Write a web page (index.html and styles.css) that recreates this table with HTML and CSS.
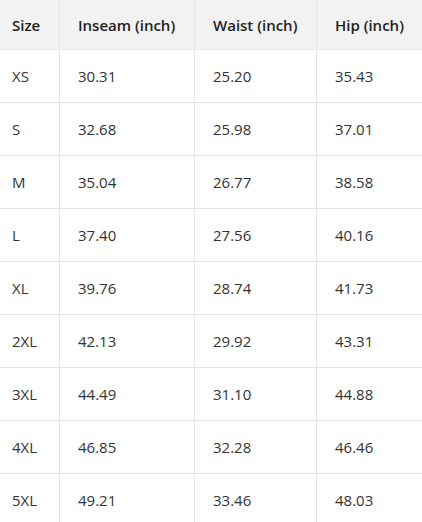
FILE: index.html
```html
<!DOCTYPE html>
<html lang="en">
<head>
<meta charset="utf-8">
<title>Size chart</title>
<link rel="stylesheet" href="styles.css">
</head>
<body>
<div class="size-table">
  <div class="cell head first">Size</div>
  <div class="cell head">Inseam (inch)</div>
  <div class="cell head">Waist (inch)</div>
  <div class="cell head last">Hip (inch)</div>

  <div class="cell first">XS</div><div class="cell">30.31</div><div class="cell">25.20</div><div class="cell last">35.43</div>
  <div class="cell first">S</div><div class="cell">32.68</div><div class="cell">25.98</div><div class="cell last">37.01</div>
  <div class="cell first">M</div><div class="cell">35.04</div><div class="cell">26.77</div><div class="cell last">38.58</div>
  <div class="cell first">L</div><div class="cell">37.40</div><div class="cell">27.56</div><div class="cell last">40.16</div>
  <div class="cell first">XL</div><div class="cell">39.76</div><div class="cell">28.74</div><div class="cell last">41.73</div>
  <div class="cell first">2XL</div><div class="cell">42.13</div><div class="cell">29.92</div><div class="cell last">43.31</div>
  <div class="cell first">3XL</div><div class="cell">44.49</div><div class="cell">31.10</div><div class="cell last">44.88</div>
  <div class="cell first">4XL</div><div class="cell">46.85</div><div class="cell">32.28</div><div class="cell last">46.46</div>
  <div class="cell first">5XL</div><div class="cell">49.21</div><div class="cell">33.46</div><div class="cell last">48.03</div>
</div>
</body>
</html>
```

FILE: styles.css
```css
html, body {
  margin: 0;
  padding: 0;
  background: #ffffff;
}

body {
  font-family: "Open Sans", "Noto Sans", sans-serif;
  font-size: 15px;
  color: #333333;
}

.size-table {
  display: grid;
  grid-template-columns: 60px 135px 122px 1fr;
  grid-auto-rows: 53px;
  grid-template-rows: 50px;
  width: 422px;
}

.cell {
  box-sizing: border-box;
  display: flex;
  align-items: center;
  padding: 0 10px 0 18px;
  border-right: 1px solid #e6e6e6;
  border-bottom: 1px solid #e6e6e6;
  white-space: nowrap;
}

.cell.first {
  padding-left: 12px;
}

.cell.last {
  border-right: none;
}

.head {
  background: #f2f2f2;
  font-weight: 600;
  color: #222222;
}
```
